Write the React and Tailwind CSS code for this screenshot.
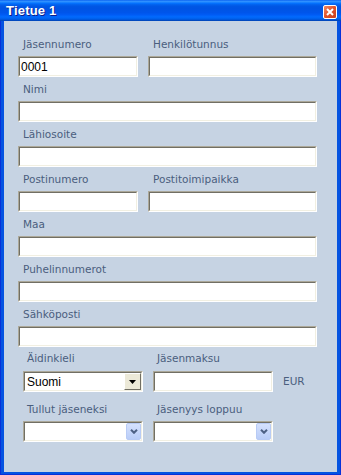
import React from 'react';

const labelTop = "block h-[13px] leading-[13px] pl-[5px] text-[10.5px] text-[#4a5e7e] whitespace-nowrap font-['DejaVu_Sans',sans-serif]";
const labelBottom = "block h-[13px] leading-[13px] pl-[4px] text-[10.5px] text-[#4a5e7e] whitespace-nowrap font-['DejaVu_Sans',sans-serif]";

// sunken XP style text box
function Box({ className, children }) {
    return (
        <div className={`h-[21px] border border-t-[#aca899] border-l-[#aca899] border-b-white border-r-white ${className}`}>
            <div className="h-full flex items-center bg-white border border-t-[#716f64] border-l-[#716f64] border-b-[#f1efe2] border-r-[#f1efe2] text-[12px] text-black font-['Liberation_Sans',sans-serif]">
                {children}
            </div>
        </div>
    );
}

function ClassicArrow() {
    return (
        <div className="h-full w-[17px] shrink-0 flex items-center justify-center bg-[#ece9d8] border border-t-white border-l-white border-b-[#716f64] border-r-[#716f64]">
            <svg width="7" height="4" viewBox="0 0 7 4">
                <path d="M0 0h7L3.5 4z" fill="#000" />
            </svg>
        </div>
    );
}

function XpArrow() {
    return (
        <div className="h-full w-[15px] shrink-0 flex items-center justify-center rounded-[2px] border border-[#b8cbf5] bg-[linear-gradient(#d5e1fd,#b9cdf8)]">
            <svg width="8" height="5" viewBox="0 0 8 5">
                <path d="M1 0.8L4 3.8L7 0.8" fill="none" stroke="#4d6185" strokeWidth="2" />
            </svg>
        </div>
    );
}

export default function App() {
    return (
        <div className="w-[341px] h-[475px] flex flex-col bg-[#0553e1] shadow-[inset_1px_0_#0831d9,inset_-1px_0_#0831d9,inset_0_-1px_#0831d9] overflow-hidden">
            {/* Title bar */}
            <div className="h-[21px] shrink-0 flex items-center justify-between pl-[6px] pr-[4px] bg-[linear-gradient(#0058ee_0%,#3593ff_5%,#288eff_9%,#127dff_13%,#036ffc_17%,#0262ee_22%,#0057e5_30%,#0054e3_40%,#0055eb_60%,#005bf5_70%,#026afe_80%,#0062ef_88%,#0052d6_95%,#0040ab_100%)]">
                <span className="text-white font-bold text-[13px] leading-none tracking-[0.2px] font-['Liberation_Sans',sans-serif] [text-shadow:1px_1px_#0f1f89]">
                    Tietue 1
                </span>
                <div className="w-[14px] h-[14px] mt-[2px] flex items-center justify-center rounded-[2px] border border-white bg-[linear-gradient(135deg,#f08a66,#e0522a_50%,#c7401f)]">
                    <svg width="8" height="8" viewBox="0 0 8 8">
                        <path d="M1 1L7 7M7 1L1 7" stroke="#fff" strokeWidth="2" />
                    </svg>
                </div>
            </div>

            {/* Form body */}
            <div className="flex-1 mx-[4px] mb-[3px] bg-[#c6d3e3] pl-[14px] pt-[17px]">
                <div className="flex gap-[10px]">
                    <div className="w-[120px]">
                        <span className={labelTop}>Jäsennumero</span>
                        <Box className="mt-[5px]"><span className="pl-px">0001</span></Box>
                    </div>
                    <div className="w-[169px]">
                        <span className={labelTop}>Henkilötunnus</span>
                        <Box className="mt-[5px]" />
                    </div>
                </div>

                <div className="w-[299px] mt-[6px]">
                    <span className={labelTop}>Nimi</span>
                    <Box className="mt-[5px]" />
                </div>

                <div className="w-[299px] mt-[6px]">
                    <span className={labelTop}>Lähiosoite</span>
                    <Box className="mt-[5px]" />
                </div>

                <div className="flex gap-[10px] mt-[6px]">
                    <div className="w-[120px]">
                        <span className={labelTop}>Postinumero</span>
                        <Box className="mt-[5px]" />
                    </div>
                    <div className="w-[169px]">
                        <span className={labelTop}>Postitoimipaikka</span>
                        <Box className="mt-[5px]" />
                    </div>
                </div>

                <div className="w-[299px] mt-[6px]">
                    <span className={labelTop}>Maa</span>
                    <Box className="mt-[5px]" />
                </div>

                <div className="w-[299px] mt-[6px]">
                    <span className={labelTop}>Puhelinnumerot</span>
                    <Box className="mt-[5px]" />
                </div>

                <div className="w-[299px] mt-[6px]">
                    <span className={labelTop}>Sähköposti</span>
                    <Box className="mt-[5px]" />
                </div>

                {/* Bottom group */}
                <div className="ml-[5px] mt-[5px]">
                    <div className="flex gap-[10px]">
                        <div className="w-[120px]">
                            <span className={labelBottom}>Äidinkieli</span>
                            <Box className="mt-[6px]">
                                <span className="flex-1 pl-[2px]">Suomi</span>
                                <ClassicArrow />
                            </Box>
                        </div>
                        <div className="w-[120px]">
                            <span className={labelBottom}>Jäsenmaksu</span>
                            <Box className="mt-[6px]" />
                        </div>
                        <span className="self-end mb-[2px] text-[10.5px] text-[#4a5e7e] font-['DejaVu_Sans',sans-serif]">EUR</span>
                    </div>

                    <div className="flex gap-[10px] mt-[11px]">
                        <div className="w-[120px]">
                            <span className={labelBottom}>Tullut jäseneksi</span>
                            <Box className="mt-[5px]">
                                <span className="flex-1" />
                                <XpArrow />
                            </Box>
                        </div>
                        <div className="w-[120px]">
                            <span className={labelBottom}>Jäsenyys loppuu</span>
                            <Box className="mt-[5px]">
                                <span className="flex-1" />
                                <XpArrow />
                            </Box>
                        </div>
                    </div>
                </div>
            </div>
        </div>
    );
}
